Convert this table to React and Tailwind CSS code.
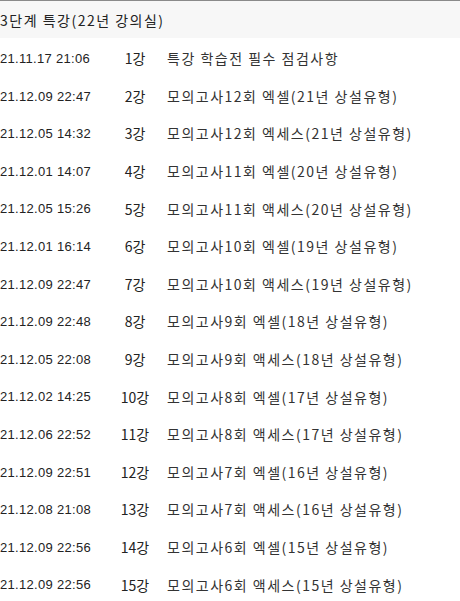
import React from 'react';

const lectures = [
  { date: '21.11.17 21:06', no: 1, title: '특강 학습전 필수 점검사항' },
  { date: '21.12.09 22:47', no: 2, title: '모의고사12회 엑셀(21년 상설유형)' },
  { date: '21.12.05 14:32', no: 3, title: '모의고사12회 엑세스(21년 상설유형)' },
  { date: '21.12.01 14:07', no: 4, title: '모의고사11회 엑셀(20년 상설유형)' },
  { date: '21.12.05 15:26', no: 5, title: '모의고사11회 액세스(20년 상설유형)' },
  { date: '21.12.01 16:14', no: 6, title: '모의고사10회 엑셀(19년 상설유형)' },
  { date: '21.12.09 22:47', no: 7, title: '모의고사10회 액세스(19년 상설유형)' },
  { date: '21.12.09 22:48', no: 8, title: '모의고사9회 엑셀(18년 상설유형)' },
  { date: '21.12.05 22:08', no: 9, title: '모의고사9회 액세스(18년 상설유형)' },
  { date: '21.12.02 14:25', no: 10, title: '모의고사8회 엑셀(17년 상설유형)' },
  { date: '21.12.06 22:52', no: 11, title: '모의고사8회 액세스(17년 상설유형)' },
  { date: '21.12.09 22:51', no: 12, title: '모의고사7회 엑셀(16년 상설유형)' },
  { date: '21.12.08 21:08', no: 13, title: '모의고사7회 액세스(16년 상설유형)' },
  { date: '21.12.09 22:56', no: 14, title: '모의고사6회 엑셀(15년 상설유형)' },
  { date: '21.12.09 22:56', no: 15, title: '모의고사6회 액세스(15년 상설유형)' },
];

const App = () => {
  return (
    <div className="w-[460px] h-[601px] overflow-hidden bg-white font-['Liberation_Sans','Noto_Sans_CJK_KR',sans-serif]">
      {/* Section header */}
      <div className="h-[38px] border-t border-[#8a8a8a] bg-[#f7f7f7] flex items-center pt-[1px]">
        <span className="text-[14px] tracking-[1.5px] text-[#222] font-['Noto_Sans_CJK_KR',sans-serif]">
          3단계 특강(22년 강의실)
        </span>
      </div>

      {/* Lecture rows */}
      <ul className="flex flex-col pt-[2px]">
        {lectures.map((item) => (
          <li key={item.no} className="h-[37.6px] flex items-center text-[#222]">
            <span className="w-[108px] shrink-0 text-[13px] tracking-[0.3px]">{item.date}</span>
            <span className="w-[54px] shrink-0 text-center text-[14px] font-['Noto_Sans_CJK_KR',sans-serif]">
              {item.no}강
            </span>
            <span className="pl-[5px] text-[14px] tracking-[1.5px] text-[#333] font-['Noto_Sans_CJK_KR',sans-serif] whitespace-nowrap">
              {item.title}
            </span>
          </li>
        ))}
      </ul>
    </div>
  );
};

export default App;
